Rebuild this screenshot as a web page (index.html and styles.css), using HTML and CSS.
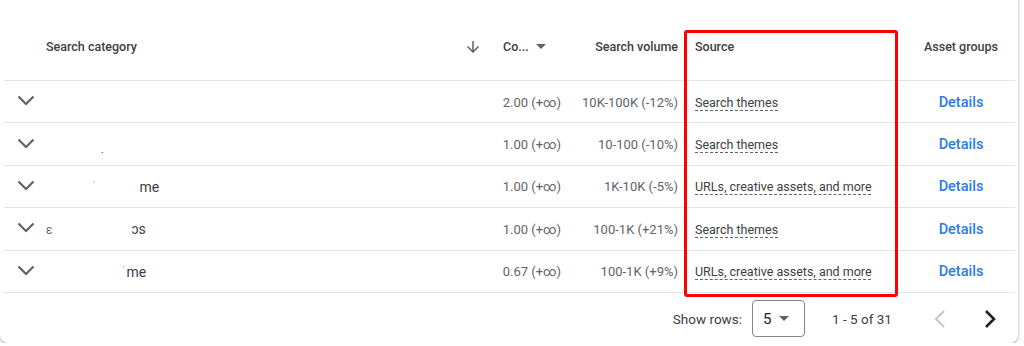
FILE: index.html
```html
<!DOCTYPE html>
<html>
<head>
<meta charset="utf-8">
<link rel="stylesheet" href="styles.css">
</head>
<body>
<div class="card">
  <div class="table">
    <div class="row head">
      <div></div>
      <div class="h-left">Search category</div>
      <div class="sort-arrow">
        <svg width="18" height="18" viewBox="0 0 24 24"><path d="M20 12l-1.41-1.41L13 16.17V4h-2v12.17l-5.58-5.59L4 12l8 8 8-8z" fill="#5f6368"/></svg>
      </div>
      <div class="h-co">Co... <span class="tri"></span></div>
      <div class="num">Search volume</div>
      <div class="src">Source</div>
      <div class="grp">Asset groups</div>
    </div>

    <div class="row">
      <div class="chev"><svg width="18" height="11" viewBox="0 0 18 11"><polyline points="1.5,1.5 9,9 16.5,1.5" fill="none" stroke="#5f6368" stroke-width="2.2"/></svg></div>
      <div class="cat"></div>
      <div></div>
      <div class="num">2.00 (+∞)</div>
      <div class="num">10K-100K (-12%)</div>
      <div class="src"><span class="dash">Search themes</span></div>
      <div class="grp"><span class="link">Details</span></div>
    </div>

    <div class="row">
      <div class="chev"><svg width="18" height="11" viewBox="0 0 18 11"><polyline points="1.5,1.5 9,9 16.5,1.5" fill="none" stroke="#5f6368" stroke-width="2.2"/></svg></div>
      <div class="cat"><span class="gap55 low">.</span></div>
      <div></div>
      <div class="num">1.00 (+∞)</div>
      <div class="num">10-100 (-10%)</div>
      <div class="src"><span class="dash">Search themes</span></div>
      <div class="grp"><span class="link">Details</span></div>
    </div>

    <div class="row">
      <div class="chev"><svg width="18" height="11" viewBox="0 0 18 11"><polyline points="1.5,1.5 9,9 16.5,1.5" fill="none" stroke="#5f6368" stroke-width="2.2"/></svg></div>
      <div class="cat"><span class="gap47 tick">'</span><span class="gap45">me</span></div>
      <div></div>
      <div class="num">1.00 (+∞)</div>
      <div class="num">1K-10K (-5%)</div>
      <div class="src"><span class="dash">URLs, creative assets, and more</span></div>
      <div class="grp"><span class="link">Details</span></div>
    </div>

    <div class="row">
      <div class="chev"><svg width="18" height="11" viewBox="0 0 18 11"><polyline points="1.5,1.5 9,9 16.5,1.5" fill="none" stroke="#5f6368" stroke-width="2.2"/></svg></div>
      <div class="cat"><span class="part">ε</span><span class="gap80">ɔs</span></div>
      <div></div>
      <div class="num">1.00 (+∞)</div>
      <div class="num">100-1K (+21%)</div>
      <div class="src"><span class="dash">Search themes</span></div>
      <div class="grp"><span class="link">Details</span></div>
    </div>

    <div class="row">
      <div class="chev"><svg width="18" height="11" viewBox="0 0 18 11"><polyline points="1.5,1.5 9,9 16.5,1.5" fill="none" stroke="#5f6368" stroke-width="2.2"/></svg></div>
      <div class="cat"><span class="gap77 tick">'</span><span class="gap2">me</span></div>
      <div></div>
      <div class="num">0.67 (+∞)</div>
      <div class="num">100-1K (+9%)</div>
      <div class="src"><span class="dash">URLs, creative assets, and more</span></div>
      <div class="grp"><span class="link">Details</span></div>
    </div>
  </div>

  <div class="footer">
    <span class="label">Show rows:</span>
    <div class="select"><span>5</span><span class="tri"></span></div>
    <span class="range">1 - 5 of 31</span>
    <button class="pg">
      <svg width="14" height="20" viewBox="0 0 14 20"><polyline points="11,2 3,10 11,18" fill="none" stroke="#c4c7c9" stroke-width="2"/></svg>
    </button>
    <button class="pg">
      <svg width="14" height="20" viewBox="0 0 14 20"><polyline points="3,2 11,10 3,18" fill="none" stroke="#202124" stroke-width="2.6"/></svg>
    </button>
  </div>

  <div class="highlight"></div>
</div>
</body>
</html>
```

FILE: styles.css
```css
html, body {
  margin: 0;
  padding: 0;
  background: #ffffff;
}

body {
  font-family: Roboto, "Liberation Sans", Arial, sans-serif;
  color: #5f6368;
  font-size: 12.5px;
}

.card {
  position: relative;
  box-sizing: border-box;
  width: 1018px;
  height: 353px;
  margin-top: -10px;
  padding-top: 10px;
  background: #fff;
  border-radius: 0 0 8px 8px;
  box-shadow: 0 1px 2px rgba(60, 64, 67, 0.3), 0 1px 3px 1px rgba(60, 64, 67, 0.15);
}

.table {
  margin-left: 4px;
  width: 1011px;
}

.row {
  display: grid;
  grid-template-columns: 42px 416px 26px 84px 112px 214px 117px;
  align-items: center;
  box-sizing: border-box;
  height: 42.4px;
  border-bottom: 1px solid #e3e3e3;
  padding-top: 1px;
}

.row.head {
  height: 81px;
  padding-top: 13px;
  color: #3c4043;
  font-weight: 500;
}

.sort-arrow {
  display: flex;
  justify-content: flex-start;
  padding-left: 2px;
  padding-top: 1px;
}

.h-co {
  padding-left: 15px;
  display: flex;
  align-items: center;
  gap: 4px;
}

.tri {
  display: inline-block;
  width: 0;
  height: 0;
  border-left: 5px solid transparent;
  border-right: 5px solid transparent;
  border-top: 5px solid #5f6368;
  margin-left: 3px;
}

.num {
  text-align: right;
  padding-right: 6px;
  white-space: nowrap;
}

.row > .num:nth-child(4) {
  padding-right: 11px;
  font-size: 13px;
}

.row > .num:nth-child(5) {
  font-size: 13px;
}

.row.head > .num:nth-child(5) {
  font-size: 12.5px;
}

.src {
  padding-left: 11px;
  color: #3c4043;
  white-space: nowrap;
}

.dash {
  text-decoration: underline dashed #5f6368;
  text-decoration-thickness: 1px;
  text-underline-offset: 3px;
}

.grp {
  text-align: center;
  padding-left: 9px;
  white-space: nowrap;
}

.link {
  color: #2a7be9;
  font-weight: 500;
  font-size: 14.5px;
}

.chev {
  display: flex;
  padding-left: 13px;
  padding-bottom: 3px;
}

.cat {
  color: #3c4043;
  font-size: 14px;
  white-space: nowrap;
}

.gap55 { margin-left: 55px; }
.gap47 { margin-left: 47px; }
.gap45 { margin-left: 45px; }
.gap80 { margin-left: 79px; }
.gap77 { margin-left: 77px; }
.gap2 { margin-left: 2px; }

.low {
  position: relative;
  top: 3px;
  font-size: 10px;
}

.tick {
  font-size: 9px;
  vertical-align: 4px;
  color: #9aa0a6;
}

.part {
  font-size: 12px;
  color: #5f6368;
}

.footer {
  display: flex;
  align-items: center;
  justify-content: flex-end;
  height: 50px;
  padding-right: 8px;
  padding-top: 1px;
  color: #3c4043;
}

.label {
  font-size: 13.5px;
  margin-right: 10px;
}

.select {
  box-sizing: border-box;
  width: 53px;
  height: 37px;
  border: 1px solid #80868b;
  border-radius: 4px;
  display: flex;
  align-items: center;
  padding-left: 10px;
  gap: 5px;
  font-size: 15px;
  color: #202124;
  margin-right: 27px;
}

.range {
  font-size: 13.5px;
  width: 58px;
  white-space: nowrap;
  margin-right: 20px;
}

.pg {
  width: 40px;
  height: 40px;
  border: none;
  background: transparent;
  display: flex;
  align-items: center;
  justify-content: center;
  padding: 0;
  margin-left: 10px;
}

.highlight {
  position: absolute;
  left: 684px;
  top: 40px;
  width: 214px;
  height: 267px;
  box-sizing: border-box;
  border: 3px solid #ff0000;
  border-radius: 3px;
  pointer-events: none;
}
```
